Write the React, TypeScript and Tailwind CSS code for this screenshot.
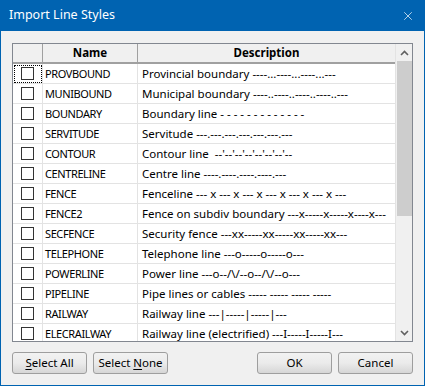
import { X } from 'lucide-react'

const rows: [string, string][] = [
  ['PROVBOUND', 'Provincial boundary ----...----...----...---'],
  ['MUNIBOUND', 'Municipal boundary ----..----..----..----..---'],
  ['BOUNDARY', 'Boundary line - - - - - - - - - - - - -'],
  ['SERVITUDE', 'Servitude ---.---.---.---.---.---.---'],
  ['CONTOUR', "Contour line  --'--'--'--'--'--'--'--"],
  ['CENTRELINE', 'Centre line ----.----.----.----.---'],
  ['FENCE', 'Fenceline --- x --- x --- x --- x --- x --- x ---'],
  ['FENCE2', 'Fence on subdiv boundary ---x-----x-----x----x---'],
  ['SECFENCE', 'Security fence ---xx-----xx-----xx-----xx---'],
  ['TELEPHONE', 'Telephone line ---o-----o-----o---'],
  ['POWERLINE', 'Power line ---o--/\\/--o--/\\/--o---'],
  ['PIPELINE', 'Pipe lines or cables ----- ----- ----- -----'],
  ['RAILWAY', 'Railway line ---|-----|-----|---'],
  ['ELECRAILWAY', 'Railway line (electrified) ---I-----I-----I---'],
]

function DlgButton({ children }: { children: React.ReactNode }) {
  return (
    <button
      type="button"
      className="flex h-[22px] w-[75px] items-center justify-center rounded-[3px] border border-[#9e9e9e] bg-gradient-to-b from-[#f2f2f2] via-[#ebebeb] to-[#d6d6d6] text-[11.5px] text-black"
    >
      <span className="whitespace-pre">{children}</span>
    </button>
  )
}

export default function App() {
  return (
    <div
      className="flex h-[386px] w-[425px] flex-col bg-[#0063b1] px-[1px] pb-[1px]"
      style={{ fontFamily: '"Noto Sans", "Open Sans", sans-serif' }}
    >
      {/* Title bar */}
      <div className="flex h-[31px] shrink-0 items-center justify-between pl-[8px] pr-[9px] text-white">
        <span className="text-[12.5px]">Import Line Styles</span>
        <X className="h-[14px] w-[14px]" strokeWidth={1.2} />
      </div>

      {/* Body */}
      <div className="flex flex-1 flex-col bg-[#f0f0f0] pl-[11px] pt-[12px]">
        <div className="flex h-[299px] w-[401px] border border-[#828790] bg-white">
          <div className="flex-1 overflow-hidden">
            {/* Header */}
            <div className="grid h-[20px] grid-cols-[30px_95px_1fr] border-b-2 border-[#a0a0a0] bg-[#f0f0f0] text-[11.5px] font-bold">
              <div className="border-r border-[#a0a0a0]" />
              <div className="flex items-center justify-center border-r border-[#a0a0a0]">Name</div>
              <div className="flex items-center justify-center">Description</div>
            </div>
            {rows.map(([name, desc], i) => (
              <div
                key={name}
                className="grid h-[20px] grid-cols-[30px_95px_1fr] border-b border-[#e3e3e3] leading-[19px] text-black"
              >
                <div className="flex items-center justify-center border-r border-[#e3e3e3]">
                  <div
                    className={
                      i === 0
                        ? 'flex h-[18px] w-[28px] items-center justify-center border border-dotted border-black'
                        : 'flex h-[18px] w-[28px] items-center justify-center'
                    }
                  >
                    <div className="h-[13px] w-[13px] border border-[#333333] bg-white" />
                  </div>
                </div>
                <div className="whitespace-nowrap border-r border-[#e3e3e3] pl-[2px] text-[11px] tracking-[-0.4px]">
                  {name}
                </div>
                <div className="whitespace-pre pl-[4px] text-[11.5px]">{desc}</div>
              </div>
            ))}
          </div>

          {/* Scrollbar */}
          <div className="flex w-[17px] shrink-0 flex-col items-center border-l border-[#e3e3e3] bg-[#f0f0f0]">
            <div className="flex h-[17px] w-full items-center justify-center">
              <svg width="9" height="6" viewBox="0 0 9 6">
                <path d="M1 5 L4.5 1.5 L8 5" fill="none" stroke="#606060" strokeWidth="1.6" />
              </svg>
            </div>
            <div className="h-[155px] w-[15px] bg-[#cdcdcd]" />
            <div className="flex-1" />
            <div className="flex h-[17px] w-full items-center justify-center">
              <svg width="9" height="6" viewBox="0 0 9 6">
                <path d="M1 1 L4.5 4.5 L8 1" fill="none" stroke="#606060" strokeWidth="1.6" />
              </svg>
            </div>
          </div>
        </div>

        {/* Buttons */}
        <div className="mt-[10px] flex w-[401px] items-center">
          <DlgButton>
            <span className="underline underline-offset-2">S</span>elect All
          </DlgButton>
          <div className="ml-[6px]">
            <DlgButton>
              Select <span className="underline underline-offset-2">N</span>one
            </DlgButton>
          </div>
          <div className="ml-auto flex gap-[6px]">
            <DlgButton>OK</DlgButton>
            <DlgButton>Cancel</DlgButton>
          </div>
        </div>
      </div>
    </div>
  )
}
